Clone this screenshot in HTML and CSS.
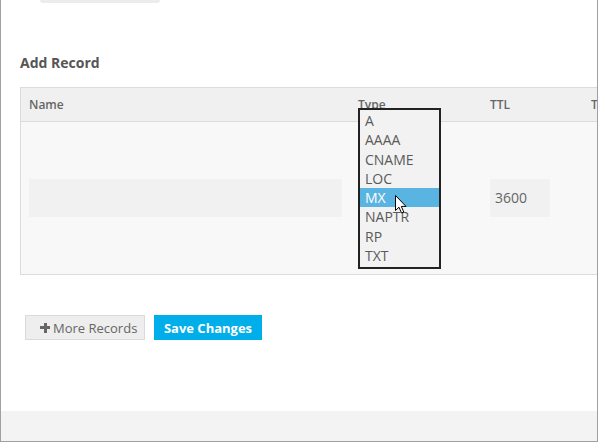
FILE: index.html
```html
<!DOCTYPE html>
<html>
<head>
<meta charset="utf-8">
<link rel="stylesheet" href="styles.css">
</head>
<body>
<div class="window">
  <div class="content">
    <div class="tab"></div>
    <h2 class="title">Add Record</h2>
    <div class="records">
      <div class="row head">
        <div class="cell c-name">Name</div>
        <div class="cell c-type">Type</div>
        <div class="cell c-ttl">TTL</div>
        <div class="cell c-extra">T</div>
      </div>
      <div class="row body">
        <div class="cell c-name"><div class="field name-field"></div></div>
        <div class="cell c-type">
          <div class="field type-field"></div>
          <ul class="dropdown">
            <li>A</li>
            <li>AAAA</li>
            <li>CNAME</li>
            <li>LOC</li>
            <li class="active">MX</li>
            <li>NAPTR</li>
            <li>RP</li>
            <li>TXT</li>
          </ul>
          <svg class="cursor" width="12" height="19" viewBox="0 0 12 19">
            <path d="M0.5 0.5 L0.5 15.5 L4 12.2 L6.5 18 L8.8 17 L6.3 11.4 L11 11.4 Z" fill="#fff" stroke="#000" stroke-width="1" stroke-linejoin="miter"/>
          </svg>
        </div>
        <div class="cell c-ttl"><div class="field ttl-field">3600</div></div>
        <div class="cell c-extra"></div>
      </div>
    </div>
    <div class="actions">
      <button class="btn btn-more"><span class="plus"></span>More Records</button>
      <button class="btn btn-save">Save Changes</button>
    </div>
  </div>
  <div class="footer"></div>
</div>
</body>
</html>
```

FILE: styles.css
```css
html, body {
  margin: 0;
  padding: 0;
  background: #fff;
  overflow: hidden;
}
body {
  font-family: "Open Sans", "Liberation Sans", sans-serif;
  color: #555;
}
.window {
  width: 598px;
  height: 442px;
  box-sizing: border-box;
  border-left: 1px solid #a0a0a0;
  border-right: 1px solid #a0a0a0;
  border-bottom: 1px solid #a0a0a0;
  display: flex;
  flex-direction: column;
  overflow: hidden;
}
.content {
  flex: 1;
  padding-left: 19px;
  overflow: hidden;
}
.tab {
  margin-left: 20px;
  width: 120px;
  height: 3px;
  background: #ececec;
  border-radius: 0 0 3px 3px;
}
.title {
  margin: 51px 0 0 0;
  font-size: 14px;
  line-height: 18px;
  font-weight: 700;
  color: #555;
}
.records {
  margin-top: 15px;
  width: 700px;
  border-top: 1px solid #dcdcdc;
  border-left: 1px solid #dcdcdc;
  border-bottom: 1px solid #dcdcdc;
}
.row {
  display: grid;
  grid-template-columns: 328px 132px 101px 139px;
}
.head {
  height: 33px;
  background: #f0f0f0;
  border-bottom: 1px solid #dcdcdc;
  font-size: 12px;
  font-weight: 600;
  color: #666;
  align-items: center;
}
.head .cell {
  padding-left: 9px;
  padding-bottom: 1px;
}
.head .c-name {
  padding-left: 8px;
}
.body {
  height: 152px;
  background: #f8f8f8;
  align-items: center;
}
.body .cell {
  padding-left: 9px;
  position: relative;
  height: 38px;
}
.body .c-name {
  padding-left: 8px;
}
.field {
  height: 38px;
  background: #f1f1f1;
  box-sizing: border-box;
}
.name-field {
  width: 313px;
}
.type-field {
  width: 70px;
  background: transparent;
}
.ttl-field {
  width: 60px;
  padding-left: 5px;
  font-size: 14px;
  line-height: 38px;
  color: #666;
}
.dropdown {
  position: absolute;
  left: 9px;
  top: -71px;
  width: 79px;
  height: 156px;
  margin: 0;
  padding: 1px 0 0 0;
  list-style: none;
  background: #f2f2f2;
  border: 2px solid #222;
  font-size: 14px;
  color: #5a5a5a;
  box-sizing: content-box;
}
.dropdown li {
  height: 19.3px;
  line-height: 19.3px;
  padding-left: 5px;
}
.dropdown li.active {
  background: #5ab4e1;
  color: #fff;
}
.cursor {
  position: absolute;
  left: 46px;
  top: 16px;
}
.actions {
  margin-top: 40px;
  margin-left: 5px;
  display: flex;
  gap: 9px;
}
.btn {
  height: 25px;
  font-family: "Open Sans", "Liberation Sans", sans-serif;
  font-size: 13px;
  box-sizing: border-box;
  padding: 0;
  display: flex;
  align-items: center;
  cursor: pointer;
}
.btn-more {
  width: 120px;
  background: #eeeeee;
  border: 1px solid #dadada;
  color: #666;
  gap: 3px;
  padding-left: 14px;
  justify-content: flex-start;
}
.plus {
  position: relative;
  width: 10px;
  height: 10px;
  display: inline-block;
}
.plus::before, .plus::after {
  content: "";
  position: absolute;
  background: #666;
}
.plus::before {
  left: 0;
  top: 3.5px;
  width: 10px;
  height: 3px;
}
.plus::after {
  left: 3.5px;
  top: 0;
  width: 3px;
  height: 10px;
}
.btn-save {
  width: 108px;
  background: #00aeea;
  border: none;
  color: #fff;
  font-weight: 700;
  justify-content: center;
}
.footer {
  height: 30px;
  background: #f3f3f3;
}
```
